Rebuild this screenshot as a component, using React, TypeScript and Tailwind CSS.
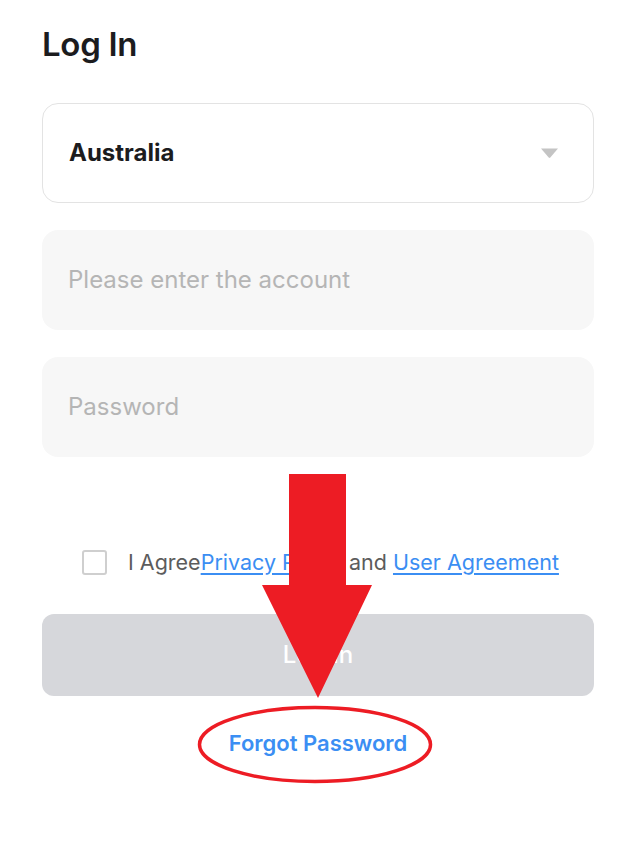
import React from "react";

export default function App() {
  return (
    <div
      className="relative w-[622px] h-[854px] bg-white overflow-hidden"
      style={{ fontFamily: "Inter, 'Noto Sans', sans-serif" }}
    >
      <div className="pl-[42px] pr-[28px] pt-[24px] flex flex-col">
        <h1 className="text-[33px] leading-[40px] font-semibold text-[#1c1c1e] tracking-[-0.3px]">Log In</h1>

        <div className="mt-[39px] h-[100px] rounded-[16px] border border-[#e3e3e3] flex items-center justify-between pl-[26px] pr-[34px]">
          <span className="text-[24px] font-bold text-[#1c1c1e]">Australia</span>
          <svg width="19" height="12" viewBox="0 0 19 12">
            <path d="M1 1.5 H18 L10.3 10.5 Q9.5 11.3 8.7 10.5 Z" fill="#c4c4c4" />
          </svg>
        </div>

        <div className="mt-[27px] h-[100px] rounded-[16px] bg-[#f7f7f7] flex items-center pl-[26px]">
          <span className="text-[24px] text-[#b5b5b5]">Please enter the account</span>
        </div>

        <div className="mt-[27px] h-[100px] rounded-[16px] bg-[#f7f7f7] flex items-center pl-[26px]">
          <span className="text-[24px] text-[#b5b5b5]">Password</span>
        </div>

        <div className="mt-[89px] flex items-center pl-[40px]">
          <div className="w-[25px] h-[25px] rounded-[3px] border-2 border-[#cfcfcf] bg-white" />
          <p className="ml-[21px] text-[21.5px] text-[#5c5c5c] whitespace-nowrap">
            I Agree
            <span className="text-[#3b8ef3] underline underline-offset-[3px]">Privacy Policy</span>
            {" "}and{" "}
            <span className="text-[#3b8ef3] underline underline-offset-[3px]">User Agreement</span>
          </p>
        </div>

        <div className="mt-[36px] h-[82px] rounded-[12px] bg-[#d6d7db] flex items-center justify-center">
          <span className="text-[24px] font-medium text-white">Log In</span>
        </div>

        <div className="mt-[31px] flex justify-center">
          <span className="text-[22px] font-semibold text-[#3b8ef3]">Forgot Password</span>
        </div>
      </div>

      <svg className="absolute left-0 top-0 pointer-events-none" width="622" height="854" viewBox="0 0 622 854">
        <path d="M289 474 H346 V585 H372 L318 698 L262 585 H289 Z" fill="#ed1c24" />
        <ellipse cx="315" cy="744.5" rx="115.5" ry="37" fill="none" stroke="#ed1c24" strokeWidth="3.5" />
      </svg>
    </div>
  );
}
